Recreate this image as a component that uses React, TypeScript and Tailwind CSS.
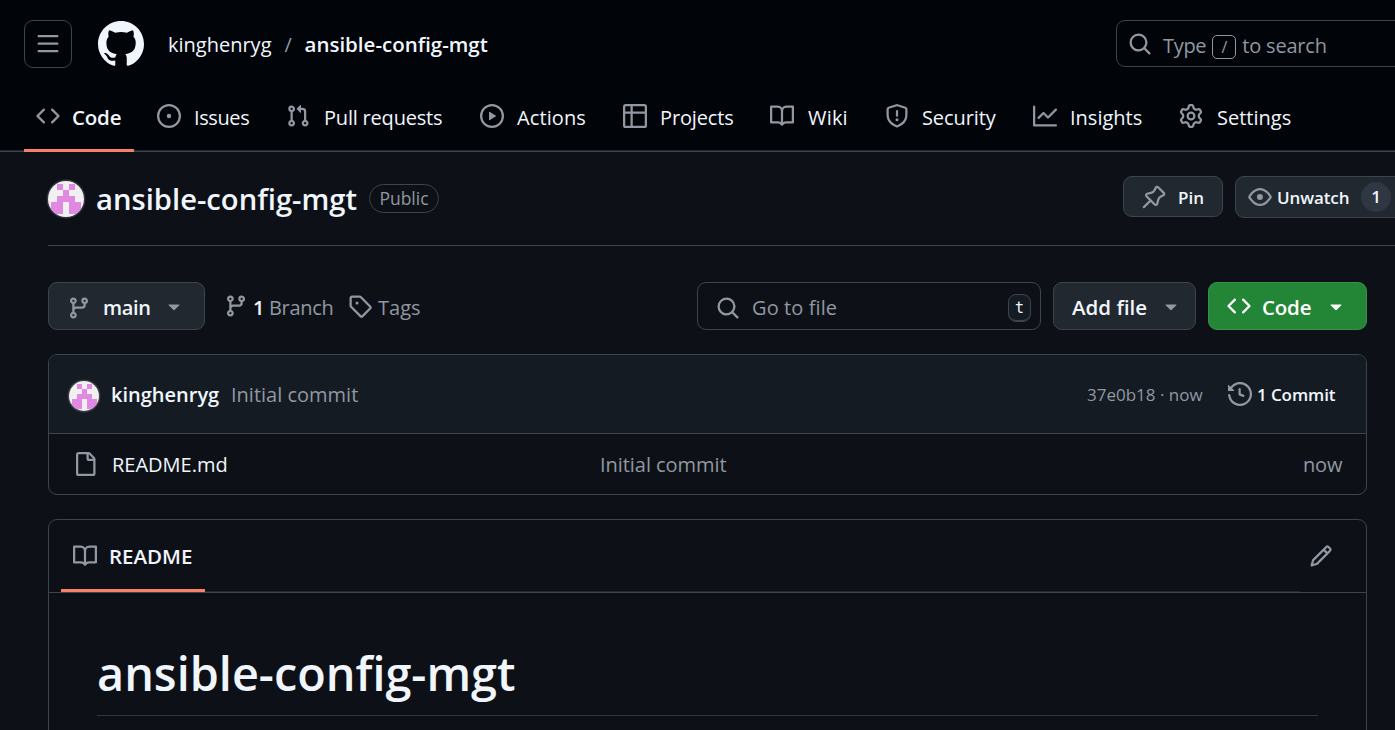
import type { ReactNode } from 'react';

const paths = {
  bars: 'M1 2.75A.75.75 0 0 1 1.75 2h12.5a.75.75 0 0 1 0 1.5H1.75A.75.75 0 0 1 1 2.75Zm0 5A.75.75 0 0 1 1.75 7h12.5a.75.75 0 0 1 0 1.5H1.75A.75.75 0 0 1 1 7.75ZM1.75 12h12.5a.75.75 0 0 1 0 1.5H1.75a.75.75 0 0 1 0-1.5Z',
  github:
    'M8 0c4.42 0 8 3.58 8 8a8.013 8.013 0 0 1-5.45 7.59c-.4.08-.55-.17-.55-.38 0-.27.01-1.13.01-2.2 0-.75-.25-1.23-.54-1.48 1.78-.2 3.65-.88 3.65-3.95 0-.88-.31-1.59-.82-2.15.08-.2.36-1.02-.08-2.12 0 0-.67-.22-2.2.82-.64-.18-1.32-.27-2-.27-.68 0-1.36.09-2 .27-1.53-1.03-2.2-.82-2.2-.82-.44 1.1-.16 1.92-.08 2.12-.51.56-.82 1.28-.82 2.15 0 3.06 1.86 3.75 3.64 3.95-.23.2-.44.55-.51 1.07-.46.21-1.61.55-2.33-.66-.15-.24-.6-.83-1.23-.82-.67.01-.27.38.01.53.34.19.73.9.82 1.13.16.45.68 1.31 2.69.94 0 .67.01 1.3.01 1.49 0 .21-.15.45-.55.38A7.995 7.995 0 0 1 0 8c0-4.42 3.58-8 8-8Z',
  search:
    'M10.68 11.74a6 6 0 0 1-7.922-8.982 6 6 0 0 1 8.982 7.922l3.04 3.04a.749.749 0 0 1-.326 1.275.749.749 0 0 1-.734-.215ZM11.5 7a4.499 4.499 0 1 0-8.997 0A4.499 4.499 0 0 0 11.5 7Z',
  code: 'm11.28 3.22 4.25 4.25a.75.75 0 0 1 0 1.06l-4.25 4.25a.749.749 0 0 1-1.275-.326.749.749 0 0 1 .215-.734L13.94 8l-3.72-3.72a.749.749 0 0 1 .326-1.275.749.749 0 0 1 .734.215Zm-6.56 0a.751.751 0 0 1 1.042.018.751.751 0 0 1 .018 1.042L2.06 8l3.72 3.72a.749.749 0 0 1-.326 1.275.749.749 0 0 1-.734-.215L.47 8.53a.75.75 0 0 1 0-1.06Z',
  issue:
    'M8 9.5a1.5 1.5 0 1 0 0-3 1.5 1.5 0 0 0 0 3ZM8 0a8 8 0 1 1 0 16A8 8 0 0 1 8 0ZM1.5 8a6.5 6.5 0 1 0 13 0 6.5 6.5 0 0 0-13 0Z',
  pull: 'M1.5 3.25a2.25 2.25 0 1 1 3 2.122v5.256a2.251 2.251 0 1 1-1.5 0V5.372A2.25 2.25 0 0 1 1.5 3.25Zm5.677-.177L9.573.677A.25.25 0 0 1 10 .854V2.5h1A2.5 2.5 0 0 1 13.5 5v5.628a2.251 2.251 0 1 1-1.5 0V5a1 1 0 0 0-1-1h-1v1.646a.25.25 0 0 1-.427.177L7.177 3.427a.25.25 0 0 1 0-.354ZM3.75 2.5a.75.75 0 1 0 0 1.5.75.75 0 0 0 0-1.5Zm0 9.5a.75.75 0 1 0 0 1.5.75.75 0 0 0 0-1.5Zm8.25.75a.75.75 0 1 0 1.5 0 .75.75 0 0 0-1.5 0Z',
  play: 'M8 0a8 8 0 1 1 0 16A8 8 0 0 1 8 0ZM1.5 8a6.5 6.5 0 1 0 13 0 6.5 6.5 0 0 0-13 0Zm4.879-2.773 4.264 2.559a.25.25 0 0 1 0 .428l-4.264 2.559A.25.25 0 0 1 6 10.559V5.442a.25.25 0 0 1 .379-.215Z',
  table:
    'M0 1.75C0 .784.784 0 1.75 0h12.5C15.216 0 16 .784 16 1.75v12.5A1.75 1.75 0 0 1 14.25 16H1.75A1.75 1.75 0 0 1 0 14.25ZM6.5 6.5v8h7.75a.25.25 0 0 0 .25-.25V6.5Zm8-1.5V1.75a.25.25 0 0 0-.25-.25H6.5V5Zm-13 1.5v7.75c0 .138.112.25.25.25H5v-8ZM5 5V1.5H1.75a.25.25 0 0 0-.25.25V5Z',
  book: 'M0 1.75A.75.75 0 0 1 .75 1h4.253c1.227 0 2.317.59 3 1.501A3.743 3.743 0 0 1 11.006 1h4.245a.75.75 0 0 1 .75.75v10.5a.75.75 0 0 1-.75.75h-4.507a2.25 2.25 0 0 0-1.591.659l-.622.621a.75.75 0 0 1-1.06 0l-.622-.621A2.25 2.25 0 0 0 5.258 13H.75a.75.75 0 0 1-.75-.75Zm7.251 10.324.004-5.073-.002-2.253A2.25 2.25 0 0 0 5.003 2.5H1.5v9h3.757a3.75 3.75 0 0 1 1.994.574ZM8.755 4.75l-.004 7.322a3.752 3.752 0 0 1 1.992-.572H14.5v-9h-3.495a2.25 2.25 0 0 0-2.25 2.25Z',
  shield:
    'M7.467.133a1.748 1.748 0 0 1 1.066 0l5.25 1.68A1.75 1.75 0 0 1 15 3.48V7c0 1.566-.32 3.182-1.303 4.682-.983 1.498-2.585 2.813-5.032 3.855a1.697 1.697 0 0 1-1.33 0c-2.447-1.042-4.049-2.357-5.032-3.855C1.32 10.182 1 8.566 1 7V3.48a1.75 1.75 0 0 1 1.217-1.667Zm.61 1.429a.25.25 0 0 0-.153 0l-5.25 1.68a.25.25 0 0 0-.174.238V7c0 1.358.275 2.666 1.057 3.86.784 1.194 2.121 2.34 4.366 3.297a.196.196 0 0 0 .154 0c2.245-.956 3.582-2.104 4.366-3.298C13.225 9.666 13.5 8.36 13.5 7V3.48a.251.251 0 0 0-.174-.237l-5.25-1.68ZM8.75 4.75v3a.75.75 0 0 1-1.5 0v-3a.75.75 0 0 1 1.5 0ZM9 10.5a1 1 0 1 1-2 0 1 1 0 0 1 2 0Z',
  graph:
    'M1.5 1.75V13.5h13.75a.75.75 0 0 1 0 1.5H.75a.75.75 0 0 1-.75-.75V1.75a.75.75 0 0 1 1.5 0Zm14.28 2.53-5.25 5.25a.75.75 0 0 1-1.06 0L7 7.06 4.28 9.78a.751.751 0 0 1-1.042-.018.751.751 0 0 1-.018-1.042l3.25-3.25a.75.75 0 0 1 1.06 0L10 7.94l4.72-4.72a.751.751 0 0 1 1.042.018.751.751 0 0 1 .018 1.042Z',
  gear: 'M8 0a8.2 8.2 0 0 1 .701.031C9.444.095 9.99.645 10.16 1.29l.288 1.107c.018.066.079.158.212.224.231.114.454.243.668.386.123.082.233.09.299.071l1.103-.303c.644-.176 1.392.021 1.82.63.27.385.506.792.704 1.218.315.675.111 1.422-.364 1.891l-.814.806c-.049.048-.098.147-.088.294.016.257.016.515 0 .772-.01.147.038.246.088.294l.814.806c.475.469.679 1.216.364 1.891a7.977 7.977 0 0 1-.704 1.217c-.428.61-1.176.807-1.82.63l-1.102-.302c-.067-.019-.177-.011-.3.071a5.909 5.909 0 0 1-.668.386c-.133.066-.194.158-.211.224l-.29 1.106c-.168.646-.715 1.196-1.458 1.26a8.006 8.006 0 0 1-1.402 0c-.743-.064-1.289-.614-1.458-1.26l-.289-1.106c-.018-.066-.079-.158-.212-.224a5.738 5.738 0 0 1-.668-.386c-.123-.082-.233-.09-.299-.071l-1.103.303c-.644.176-1.392-.021-1.82-.63a8.12 8.12 0 0 1-.704-1.218c-.315-.675-.111-1.422.363-1.891l.815-.806c.05-.048.098-.147.088-.294a6.214 6.214 0 0 1 0-.772c.01-.147-.038-.246-.088-.294l-.815-.806C.635 6.045.431 5.298.746 4.623a7.92 7.92 0 0 1 .704-1.217c.428-.61 1.176-.807 1.82-.63l1.102.302c.067.019.177.011.3-.071.214-.143.437-.272.668-.386.133-.066.194-.158.211-.224l.29-1.106C6.009.645 6.556.095 7.299.03 7.53.01 7.764 0 8 0Zm-.571 1.525c-.036.003-.108.036-.137.146l-.289 1.105c-.147.561-.549.967-.998 1.189-.173.086-.34.183-.5.29-.417.278-.97.423-1.529.27l-1.103-.303c-.109-.03-.175.016-.195.045-.22.312-.412.644-.573.99-.014.031-.021.11.059.19l.815.806c.411.406.562.957.53 1.456a4.709 4.709 0 0 0 0 .582c.032.499-.119 1.05-.53 1.456l-.815.806c-.081.08-.073.159-.059.19.162.346.353.677.573.989.02.03.085.076.195.046l1.102-.303c.56-.153 1.113-.008 1.53.27.161.107.328.204.501.29.447.222.85.629.997 1.189l.289 1.105c.029.109.101.143.137.146a6.6 6.6 0 0 0 1.142 0c.036-.003.108-.036.137-.146l.289-1.105c.147-.561.549-.967.998-1.189.173-.086.34-.183.5-.29.417-.278.97-.423 1.529-.27l1.103.303c.109.029.175-.016.195-.045.22-.313.411-.644.573-.99.014-.031.021-.11-.059-.19l-.815-.806c-.411-.406-.562-.957-.53-1.456a4.709 4.709 0 0 0 0-.582c-.032-.499.119-1.05.53-1.456l.815-.806c.081-.08.073-.159.059-.19a6.464 6.464 0 0 0-.573-.989c-.02-.03-.085-.076-.195-.046l-1.102.303c-.56.153-1.113.008-1.53-.27a4.44 4.44 0 0 0-.501-.29c-.447-.222-.85-.629-.997-1.189l-.289-1.105c-.029-.11-.101-.143-.137-.146a6.6 6.6 0 0 0-1.142 0ZM11 8a3 3 0 1 1-6 0 3 3 0 0 1 6 0ZM9.5 8a1.5 1.5 0 1 0-3.001.001A1.5 1.5 0 0 0 9.5 8Z',
  pin: 'm11.294.984 3.722 3.722a1.75 1.75 0 0 1-.504 2.826l-1.327.613a3.089 3.089 0 0 0-1.707 2.084l-.584 2.454c-.317 1.332-1.972 1.8-2.94.832L5.75 11.311 1.78 15.28a.749.749 0 1 1-1.06-1.06l3.969-3.97-2.204-2.204c-.968-.968-.5-2.623.832-2.94l2.454-.584a3.08 3.08 0 0 0 2.084-1.707l.613-1.327a1.75 1.75 0 0 1 2.826-.504ZM6.283 9.723l2.732 2.731a.25.25 0 0 0 .42-.119l.584-2.454a4.586 4.586 0 0 1 2.537-3.098l1.328-.613a.25.25 0 0 0 .072-.404l-3.722-3.722a.25.25 0 0 0-.404.072l-.613 1.328a4.584 4.584 0 0 1-3.098 2.537l-2.454.584a.25.25 0 0 0-.119.42l2.731 2.732Z',
  eye: 'M8 2c1.981 0 3.671.992 4.933 2.078 1.27 1.091 2.187 2.345 2.637 3.023a1.62 1.62 0 0 1 0 1.798c-.45.678-1.367 1.932-2.637 3.023C11.67 13.008 9.981 14 8 14c-1.981 0-3.671-.992-4.933-2.078C1.797 10.83.88 9.576.43 8.898a1.62 1.62 0 0 1 0-1.798c.45-.677 1.367-1.931 2.637-3.022C4.33 2.992 6.019 2 8 2ZM1.679 7.932a.12.12 0 0 0 0 .136c.411.622 1.241 1.75 2.366 2.717C5.176 11.758 6.527 12.5 8 12.5c1.473 0 2.825-.742 3.955-1.715 1.124-.967 1.954-2.096 2.366-2.717a.12.12 0 0 0 0-.136c-.412-.621-1.242-1.75-2.366-2.717C10.824 4.242 9.473 3.5 8 3.5c-1.473 0-2.825.742-3.955 1.715-1.124.967-1.954 2.096-2.366 2.717ZM8 10a2 2 0 1 1-.001-3.999A2 2 0 0 1 8 10Z',
  branch:
    'M9.5 3.25a2.25 2.25 0 1 1 3 2.122V6A2.5 2.5 0 0 1 10 8.5H6a1 1 0 0 0-1 1v1.128a2.251 2.251 0 1 1-1.5 0V5.372a2.25 2.25 0 1 1 1.5 0v1.836A2.493 2.493 0 0 1 6 7h4a1 1 0 0 0 1-1v-.628A2.25 2.25 0 0 1 9.5 3.25Zm-6 0a.75.75 0 1 0 1.5 0 .75.75 0 0 0-1.5 0Zm8.25-.75a.75.75 0 1 0 0 1.5.75.75 0 0 0 0-1.5ZM4.25 12a.75.75 0 1 0 0 1.5.75.75 0 0 0 0-1.5Z',
  tag: 'M1 7.775V2.75C1 1.784 1.784 1 2.75 1h5.025c.464 0 .91.184 1.238.513l6.25 6.25a1.75 1.75 0 0 1 0 2.474l-5.026 5.026a1.75 1.75 0 0 1-2.474 0l-6.25-6.25A1.752 1.752 0 0 1 1 7.775Zm1.5 0c0 .066.026.13.073.177l6.25 6.25a.25.25 0 0 0 .354 0l5.025-5.025a.25.25 0 0 0 0-.354l-6.25-6.25a.25.25 0 0 0-.177-.073H2.75a.25.25 0 0 0-.25.25ZM6 5a1 1 0 1 1 0 2 1 1 0 0 1 0-2Z',
  down: 'm4.427 7.427 3.396 3.396a.25.25 0 0 0 .354 0l3.396-3.396A.25.25 0 0 0 11.396 7H4.604a.25.25 0 0 0-.177.427Z',
  history:
    'm.427 1.927 1.215 1.215a8.002 8.002 0 1 1-1.6 5.685.75.75 0 1 1 1.493-.154 6.5 6.5 0 1 0 1.18-4.458l1.358 1.358A.25.25 0 0 1 3.896 6H.25A.25.25 0 0 1 0 5.75V2.104a.25.25 0 0 1 .427-.177ZM7.75 4a.75.75 0 0 1 .75.75v2.992l2.028.812a.75.75 0 0 1-.557 1.392l-2.5-1A.751.751 0 0 1 7 8.25v-3.5A.75.75 0 0 1 7.75 4Z',
  file: 'M2 1.75C2 .784 2.784 0 3.75 0h6.586c.464 0 .909.184 1.237.513l2.914 2.914c.329.328.513.773.513 1.237v9.586A1.75 1.75 0 0 1 13.25 16h-9.5A1.75 1.75 0 0 1 2 14.25Zm1.75-.25a.25.25 0 0 0-.25.25v12.5c0 .138.112.25.25.25h9.5a.25.25 0 0 0 .25-.25V6h-2.75A1.75 1.75 0 0 1 9 4.25V1.5Zm6.75.062V4.25c0 .138.112.25.25.25h2.688l-.011-.013-2.914-2.914-.013-.011Z',
  pencil:
    'M11.013 1.427a1.75 1.75 0 0 1 2.474 0l1.086 1.086a1.75 1.75 0 0 1 0 2.474l-8.61 8.61c-.21.21-.47.364-.756.445l-3.251.93a.75.75 0 0 1-.927-.928l.929-3.25c.081-.286.235-.547.445-.758l8.61-8.61Zm.176 4.823L9.75 4.81l-6.286 6.287a.253.253 0 0 0-.064.108l-.558 1.953 1.953-.558a.253.253 0 0 0 .108-.064Zm1.238-3.763a.25.25 0 0 0-.354 0L10.811 3.75l1.439 1.44 1.263-1.263a.25.25 0 0 0 0-.354Z',
};

type IconName = keyof typeof paths;

function Icon({ name, className = 'size-6 text-[#9198a1]' }: { name: IconName; className?: string }) {
  return (
    <svg viewBox="0 0 16 16" fill="currentColor" aria-hidden="true" className={`block shrink-0 ${className}`}>
      <path d={paths[name]} />
    </svg>
  );
}

function Identicon({ className }: { className: string }) {
  return (
    <svg
      viewBox="0 0 12 12"
      shapeRendering="crispEdges"
      aria-hidden="true"
      className={`block shrink-0 rounded-full bg-[#f0f0f0] shadow-[0_0_0_1.5px_rgba(255,255,255,0.15)] ${className}`}
    >
      <path
        fill="#e088e2"
        d="M3 1h2v2H3zM7 1h2v2H7zM5 3h2v2H5zM3 5h6v2H3zM1 7h4v4H1zM7 7h4v4H7z"
      />
    </svg>
  );
}

const tabs: { icon: IconName; label: string; box: string; text: string }[] = [
  { icon: 'code', label: 'Code', box: 'w-[121px]', text: '-ml-px mt-[3px] text-[20.5px] font-semibold tracking-[-0.2px]' },
  { icon: 'issue', label: 'Issues', box: 'w-[129px]', text: 'mt-[5px] text-xl tracking-[-0.4px]' },
  { icon: 'pull', label: 'Pull requests', box: 'w-[194px]', text: 'mt-[5px] ml-px text-xl tracking-[-0.2px]' },
  { icon: 'play', label: 'Actions', box: 'w-[143px]', text: 'mt-[5px] text-xl tracking-[0.1px]' },
  { icon: 'table', label: 'Projects', box: 'w-[147px]', text: 'mt-[5px] text-xl tracking-[-0.15px]' },
  { icon: 'book', label: 'Wiki', box: 'w-[115px]', text: 'mt-[5px] ml-px text-xl tracking-[0.2px]' },
  { icon: 'shield', label: 'Security', box: 'w-[148px]', text: 'mt-[5px] text-xl tracking-[-0.1px]' },
  { icon: 'graph', label: 'Insights', box: 'w-[146px]', text: 'mt-[5px] text-xl' },
  { icon: 'gear', label: 'Settings', box: 'w-[140px]', text: 'mt-[5px] ml-px text-xl' },
];

function Header() {
  return (
    <header className="flex h-38 flex-col bg-[#010409]">
      <div className="flex h-[88px] shrink-0 items-center pl-6">
        <button className="flex size-12 shrink-0 items-center justify-center rounded-[9px] border border-[#3d444d]">
          <Icon name="bars" />
        </button>
        <Icon name="github" className="ml-[26px] size-[46px] text-[#f0f6fc]" />
        <div className="ml-6 flex w-[948px] shrink-0 items-center pt-0.5 text-xl">
          <span>kinghenryg</span>
          <span className="ml-[13px] w-5 text-[#9198a1]">/</span>
          <span className="mb-0.5 text-[20.5px] font-semibold">ansible-config-mgt</span>
        </div>
        <div className="mb-px flex h-[47px] w-[420px] shrink-0 items-center rounded-[9px] border border-[#3d444d] pl-[11px] text-xl text-[#9198a1]">
          <Icon name="search" />
          <span className="ml-[11px] pt-1 tracking-[-0.3px]">Type</span>
          <span className="mt-[7px] ml-1.5 flex size-6 shrink-0 items-center justify-center rounded-[5px] border border-[#9198a1] text-base">
            /
          </span>
          <span className="ml-1.5 pt-1 tracking-[-0.2px]">to search</span>
        </div>
      </div>
      <nav className="flex h-16 shrink-0 border-b border-[#3d444d] pl-6 shadow-[inset_0_-1px_0_#23282f]">
        {tabs.map((t, i) => (
          <div key={t.label} className={`flex shrink-0 ${t.box}`}>
            <div
              className={
                i === 0
                  ? '-mb-px flex w-[109.5px] items-center border-b-[3px] border-[#f78166] pl-3'
                  : 'flex items-center pb-0.5 pl-3'
              }
            >
              <div className="flex -translate-y-[3px] items-center gap-[13px]">
                <Icon name={t.icon} />
                <span className={`whitespace-nowrap ${t.text}`}>{t.label}</span>
              </div>
            </div>
          </div>
        ))}
      </nav>
    </header>
  );
}

function Button({ className, children }: { className: string; children: ReactNode }) {
  return (
    <button className={`flex shrink-0 items-center rounded-[9px] border text-left whitespace-nowrap ${className}`}>
      {children}
    </button>
  );
}

export default function App() {
  return (
    <div className="h-[730px] w-[1395px] overflow-hidden bg-[#0d1117] font-['Open_Sans','Noto_Sans',sans-serif] text-[#f0f6fc]">
      <Header />

      <div className="ml-12 flex h-[94px] items-start border-b border-[#3d444d]">
        <div className="flex h-[93px] items-center">
          <Identicon className="size-9" />
          <h1 className="ml-3 w-[273px] pt-0.5 text-[29.2px] font-semibold whitespace-nowrap">ansible-config-mgt</h1>
          <span className="flex h-[29px] w-[70px] items-center justify-center rounded-full border border-[#3d444d] text-[17.5px] text-[#9198a1]">
            Public
          </span>
        </div>
        <Button className="mt-6 ml-[684px] h-[41px] w-[100px] border-[#3d444d] bg-[#212830] pl-[18px] text-[17px] font-semibold">
          <Icon name="pin" />
          <span className="ml-3 pt-0.5">Pin</span>
        </Button>
        <Button className="mt-6 ml-3 h-[42px] w-[220px] border-[#3d444d] bg-[#212830] pl-3 text-[17px] font-semibold">
          <Icon name="eye" />
          <span className="ml-[5px] w-[84px] pt-0.5 tracking-[-0.1px]">Unwatch</span>
          <span className="flex size-[30px] items-center justify-center rounded-full bg-[#2f3742]">1</span>
        </Button>
      </div>

      <main className="ml-12 w-[1319px] pt-9">
        <div className="flex h-12 items-center">
          <Button className="h-12 w-[157px] border-[#3d444d] bg-[#212830] pl-[18px] text-xl font-semibold">
            <Icon name="branch" className="mt-1 size-6 text-[#9198a1]" />
            <span className="ml-3 w-[59px] pt-1 tracking-[-0.3px]">main</span>
            <Icon name="down" />
          </Button>
          <div className="ml-[19px] flex items-center text-xl whitespace-nowrap text-[#9198a1]">
            <Icon name="branch" />
            <span className="ml-[5px] w-4 pt-[3px] font-semibold text-[#f0f6fc]">1</span>
            <span className="w-[79px] pt-[3px] tracking-[-0.3px]">Branch</span>
            <Icon name="tag" />
            <span className="ml-1.5 pt-[3px]">Tags</span>
          </div>
          <div className="ml-auto flex h-12 w-[344px] items-center rounded-[9px] border border-[#3d444d] pl-[18px] text-xl text-[#9198a1]">
            <Icon name="search" className="mt-1 size-6 text-[#9198a1]" />
            <span className="ml-3 w-[256px] pt-1 tracking-[0.1px]">Go to file</span>
            <kbd className="mt-1 flex h-7 w-[23px] items-center justify-center rounded-[8px] border border-[#3d444d] bg-[#151b23] pt-px font-['DejaVu_Sans_Mono',monospace] text-[15px] text-[#f0f6fc] shadow-[inset_0_-1px_0_#3d444d]">
              t
            </kbd>
          </div>
          <Button className="ml-3 h-12 w-[143px] border-[#3d444d] bg-[#212830] pl-[18px] text-[20.5px] font-semibold">
            <span className="w-[87px] pt-0.5">Add file</span>
            <Icon name="down" />
          </Button>
          <Button className="ml-3 h-12 w-[159px] border-[#3a9149] bg-[#238636] pl-[18px] text-[20.5px] font-semibold text-white">
            <Icon name="code" className="size-6" />
            <span className="ml-[11px] w-[62px] pt-0.5 tracking-[-0.2px]">Code</span>
            <Icon name="down" className="size-6" />
          </Button>
        </div>

        <section className="mt-6 h-[141px] overflow-hidden rounded-[9px] border border-[#3d444d]">
          <div className="flex h-[79px] items-center border-b border-[#3d444d] bg-[#151b23] pl-5 text-xl whitespace-nowrap">
            <Identicon className="mt-1 size-[30px]" />
            <span className="ml-3 w-[120px] pt-0.5 font-semibold">kinghenryg</span>
            <span className="w-[856px] pt-0.5 text-[#9198a1]">Initial commit</span>
            <span className="w-[141px] pt-0.5 text-[17px] text-[#9198a1]">37e0b18 · now</span>
            <Icon name="history" />
            <span className="ml-[5px] pt-0.5 text-[17px] font-semibold tracking-[-0.1px]">1 Commit</span>
          </div>
          <div className="flex h-[60px] items-center pl-6 text-xl text-[#9198a1]">
            <Icon name="file" />
            <span className="ml-[15px] w-[488px] pt-0.5 text-[#f0f6fc]">README.md</span>
            <span className="w-[703px] pt-0.5 tracking-[-0.05px]">Initial commit</span>
            <span className="pt-0.5 tracking-[-0.2px]">now</span>
          </div>
        </section>

        <section className="mt-6 h-[300px] rounded-t-[9px] border border-[#3d444d]">
          <div className="flex h-[73px] border-b border-[#3d444d] pl-3">
            <div className="flex h-[72px] w-[144px] items-center border-b-[3px] border-[#f78166] pl-3">
              <Icon name="book" className="mt-[3px] size-6 text-[#9198a1]" />
              <span className="ml-3 pt-[3px] text-[20.5px] font-semibold">README</span>
            </div>
            <div className="h-[72px] w-[1095px] border-b border-[#23282f]" />
            <Icon name="pencil" className="mt-6 ml-[9px] size-6 text-[#9198a1]" />
          </div>
          <div className="mx-12 flex h-[123px] items-end border-b border-[#3d444d]/70">
            <h2 className="mb-2.5 text-[46.8px] leading-[64px] font-semibold whitespace-nowrap">ansible-config-mgt</h2>
          </div>
        </section>
      </main>
    </div>
  );
}
